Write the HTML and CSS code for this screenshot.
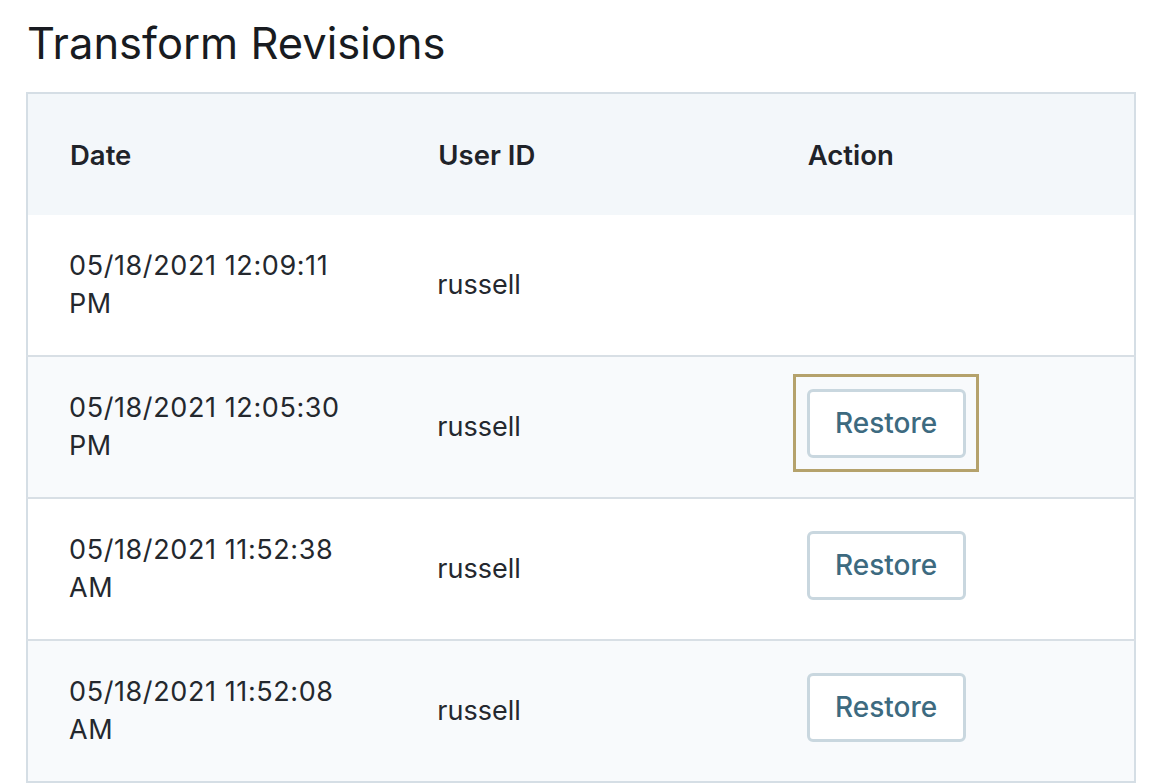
FILE: index.html
```html
<!DOCTYPE html>
<html>
<head>
<meta charset="utf-8">
<link rel="stylesheet" href="styles.css">
</head>
<body>
<h1 class="title">Transform Revisions</h1>
<table class="revisions">
  <thead>
    <tr><th>Date</th><th>User ID</th><th>Action</th></tr>
  </thead>
  <tbody>
    <tr><td class="date">05/18/2021 12:09:11 PM</td><td>russell</td><td></td></tr>
    <tr class="alt"><td class="date">05/18/2021 12:05:30 PM</td><td>russell</td><td><button class="restore focused">Restore</button></td></tr>
    <tr><td class="date">05/18/2021 11:52:38 AM</td><td>russell</td><td><button class="restore">Restore</button></td></tr>
    <tr class="alt"><td class="date">05/18/2021 11:52:08 AM</td><td>russell</td><td><button class="restore">Restore</button></td></tr>
  </tbody>
</table>
</body>
</html>
```
FILE: styles.css
```css
html, body {
  margin: 0;
  background: #ffffff;
}
body {
  padding: 0 24px 0 26px;
  font-family: Inter, "Noto Sans", sans-serif;
  color: #1f2329;
}
.title {
  margin: 0;
  padding-top: 15px;
  height: 92px;
  box-sizing: border-box;
  padding-left: 1px;
  font-size: 43.5px;
  font-weight: 400;
  line-height: 56px;
  color: #181b21;
}
.revisions {
  width: 1110px;
  border-collapse: collapse;
  border: 2px solid #d5dee5;
  table-layout: fixed;
}
.revisions th {
  background: #f3f7fa;
  height: 121px;
  padding: 0 42px;
  text-align: left;
  font-size: 27.5px;
  font-weight: 600;
  color: #1f2329;
}
.revisions td {
  height: 140px;
  padding: 0 42px 0 41px;
  font-size: 27px;
  line-height: 38px;
  color: #24282e;
  vertical-align: middle;
}
.revisions td.date {
  letter-spacing: 0.6px;
  padding-right: 30px;
}
.revisions tbody tr + tr td {
  border-top: 2px solid #d8dfe5;
}
.revisions tr.alt td {
  background: #f8fafc;
}
.restore {
  position: relative;
  display: block;
  margin-top: -8px;
  width: 159px;
  height: 69px;
  background: #ffffff;
  border: 3px solid #c9d7df;
  border-radius: 6px;
  font-family: Inter, "Noto Sans", sans-serif;
  font-size: 28px;
  font-weight: 500;
  color: #3d6a80;
  padding: 0;
  cursor: pointer;
}
.restore.focused {
  outline: none;
}
.restore.focused::after {
  content: "";
  position: absolute;
  top: -18px;
  left: -17px;
  right: -16px;
  bottom: -17px;
  border: 3px solid #b5a26c;
}
```
